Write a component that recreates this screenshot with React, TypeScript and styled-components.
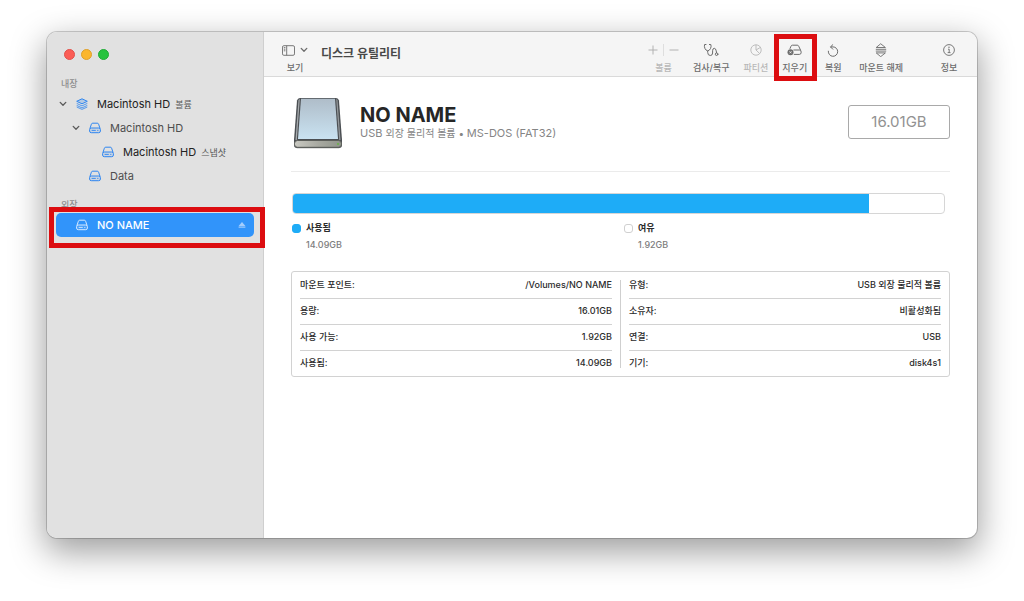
import React from "react";
import styled, { createGlobalStyle, css } from "styled-components";

const GlobalStyle = createGlobalStyle`
  *, *::before, *::after { box-sizing: border-box; }
  body {
    margin: 0;
    background: #fff;
    color: #2b2b2b;
    font-family: Inter, "Noto Sans CJK KR", sans-serif;
    font-size: 11px;
    line-height: 16px;
  }
  button {
    margin: 0;
    padding: 0;
    border: 0;
    background: none;
    color: inherit;
    font: inherit;
  }
  h1, h2, h3, p, ul, dl, dd { margin: 0; padding: 0; }
  ul { list-style: none; }
  svg { display: block; flex: none; }
`;

const Desktop = styled.div`
  display: flex;
  min-height: 100vh;
  padding: 32px 47px 63px;
`;

const Window = styled.div`
  display: flex;
  flex: 1;
  min-width: 0;
  border-radius: 10px;
  background: #fff;
  box-shadow:
    0 0 0 1px rgba(0, 0, 0, 0.18),
    0 12px 34px 2px rgba(0, 0, 0, 0.38);
`;

const Sidebar = styled.nav`
  position: relative;
  z-index: 1;
  flex: none;
  width: 217px;
  padding: 17px 9px;
  border-right: 1px solid #cfcfcf;
  border-radius: 10px 0 0 10px;
  background: #e1e1e1;
`;

const WindowControls = styled.div`
  display: flex;
  gap: 6px;
  padding: 0 8px;
`;

const WindowDot = styled.button<{ $color: string; $edge: string }>`
  width: 11px;
  height: 11px;
  border: 1px solid ${(p) => p.$edge};
  border-radius: 50%;
  background: ${(p) => p.$color};
`;

const SectionTitle = styled.h2<{ $top: number }>`
  margin-top: ${(p) => p.$top}px;
  padding-left: 5px;
  color: #8d8d8d;
  font-size: 9px;
  font-weight: 500;
  line-height: 16px;
`;

const VolumeList = styled.ul`
  position: relative;
`;

const VolumeRow = styled.li<{ $level?: number; $selected?: boolean }>`
  display: flex;
  align-items: center;
  height: 24px;
  padding-right: 8px;
  padding-left: ${(p) => (p.$level ?? 0) * 13}px;
  border-radius: 5px;
  ${(p) =>
    p.$selected &&
    css`
      background: #3194fa;
      color: #fff;
    `}
`;

const Disclosure = styled.button`
  display: grid;
  place-items: center;
  width: 14px;
  height: 16px;
  color: #5a5a5a;
`;

const DisclosureSpace = styled.span`
  width: 14px;
`;

const VolumeButton = styled.button<{ $dim?: boolean; $selected?: boolean }>`
  display: flex;
  flex: 1;
  align-items: center;
  gap: 9px;
  padding-left: 6px;
  color: ${(p) => (p.$selected ? "#fff" : p.$dim ? "#4e4e4e" : "#222")};
  font-weight: ${(p) => (p.$selected ? 500 : 400)};
  text-align: left;
  white-space: nowrap;

  svg { color: ${(p) => (p.$selected ? "#d5e9ff" : "#2f86f0")}; }
`;

const VolumeKind = styled.small`
  margin-left: 5px;
  color: #555;
  font-size: 9px;
`;

const Highlight = styled.span<{ $inset: string }>`
  position: absolute;
  inset: ${(p) => p.$inset};
  border: 5px solid #dc0d10;
  pointer-events: none;
`;

const Main = styled.main`
  flex: 1;
  min-width: 0;
`;

const Toolbar = styled.header`
  display: flex;
  align-items: flex-start;
  height: 45px;
  padding: 9px 16px 0 18px;
  border-bottom: 1px solid #dadada;
  border-radius: 0 10px 0 0;
  background: #f5f5f5;
`;

const ToolbarTitle = styled.h1`
  flex: 1;
  margin: 5px 0 0 13px;
  color: #484848;
  font-size: 12px;
  font-weight: 700;
  line-height: 16px;
  white-space: nowrap;
`;

const Tools = styled.div`
  display: flex;
  gap: 14px;
`;

const Tool = styled.button<{ $apart?: boolean }>`
  position: relative;
  display: flex;
  flex-direction: column;
  align-items: center;
  min-width: 24px;
  margin-left: ${(p) => (p.$apart ? 20 : 0)}px;
  color: #6c6c6c;
  font-size: 9px;
  font-weight: 500;
  line-height: 18px;
  white-space: nowrap;

  &:disabled { color: #b8b8b8; }
`;

const ToolGroup = styled.div`
  display: flex;
  flex-direction: column;
  align-items: center;
  color: #b8b8b8;
  font-size: 9px;
  font-weight: 500;
  line-height: 18px;
`;

const IconSlot = styled.span`
  display: flex;
  align-items: center;
  gap: 5px;
  height: 18px;
`;

const StepButton = styled.button`
  &:disabled { color: #ababab; }
`;

const StepDivider = styled.span`
  width: 1px;
  height: 12px;
  background: #dedede;
`;

const Content = styled.section`
  padding: 17px 27px 28px;
`;

const VolumeHeader = styled.div`
  display: flex;
  align-items: center;
  height: 77px;
  padding-bottom: 21px;
  padding-left: 1px;
`;

const VolumeText = styled.div`
  flex: 1;
  margin-left: 16px;
`;

const VolumeName = styled.h2`
  color: #262626;
  font-size: 20px;
  font-weight: 700;
  line-height: 22px;
`;

const VolumeDescription = styled.p`
  color: #858585;
  font-size: 11px;
  line-height: 14px;
`;

const Korean = styled.span`
  font-size: 10px;
`;

const Capacity = styled.div`
  display: grid;
  place-items: center;
  width: 102px;
  height: 34px;
  border: 1px solid #a9a9a9;
  border-radius: 3px;
  color: #929292;
  font-size: 15px;
`;

const Rule = styled.hr`
  height: 1px;
  margin: 0 0 21px;
  border: 0;
  background: #ebebeb;
`;

const UsageBar = styled.div`
  height: 21px;
  margin: 0 5px 0 1px;
  overflow: hidden;
  border: 1px solid #d6d6d6;
  border-radius: 4px;
`;

const UsageFill = styled.div`
  height: 21px;
  margin: -1px 0 0 -1px;
  background: #1eacf7;
`;

const Legend = styled.dl`
  display: grid;
  grid-template-columns: 1fr 1fr;
  gap: 6px;
  margin: 6px 0 0 1px;
`;

const LegendLabel = styled.dt`
  display: flex;
  align-items: center;
  gap: 5px;
  font-size: 9px;
  font-weight: 700;
  line-height: 16px;
`;

const Swatch = styled.span<{ $filled?: boolean }>`
  width: 9px;
  height: 9px;
  border: 1px solid ${(p) => (p.$filled ? "#1eacf7" : "#d0d0d0")};
  border-radius: 3px;
  background: ${(p) => (p.$filled ? "#1eacf7" : "#fff")};
`;

const LegendValue = styled.dd`
  padding-left: 14px;
  color: #7d7d7d;
  font-size: 9px;
  font-weight: 500;
  line-height: 18px;
`;

const Details = styled.div`
  display: grid;
  grid-template-columns: 1fr 1px 1fr;
  column-gap: 8px;
  margin-top: 17px;
  padding: 0 8px;
  border: 1px solid #d2d2d2;
  border-radius: 3px;
`;

const DetailsDivider = styled.div`
  margin: 8px 0;
  background: #cfcfcf;
`;

const DetailTable = styled.table`
  width: 100%;
  border-collapse: collapse;
  font-size: 9px;
  line-height: 16px;

  tr + tr { border-top: 1px solid #d2d2d2; }
  th, td { height: 26px; padding: 0; font-weight: 500; }
  th { text-align: left; }
  td { text-align: right; }
`;

const DriveIcon = () => (
  <svg width="12" height="12" viewBox="0 0 12 12" fill="none" stroke="currentColor">
    <path d="M.9 6.600 2.400 2.200Q2.700 1.200 3.700 1.200h4.600q1 0 1.300 1l1.500 4.400" />
    <rect x=".6" y="6" width="10.800" height="4.700" rx="1.700" fill="currentColor" fillOpacity=".12" />
    <path d="M2.600 8.400h4.200M8.200 8.400h1.200" strokeWidth=".9" />
  </svg>
);

const LayersIcon = () => (
  <svg width="12" height="12" viewBox="0 0 12 12" fill="none" stroke="currentColor" strokeLinejoin="round">
    <path d="M6 .8 11.3 3.3 6 5.8.7 3.3Z" fill="currentColor" fillOpacity=".25" />
    <path d="M.7 5.4 6 7.9l5.3-2.5M.7 7.4 6 9.9l5.3-2.5M.7 9 6 11.4 11.3 9" strokeWidth=".8" />
  </svg>
);

const ChevronIcon = () => (
  <svg width="8" height="6" viewBox="0 0 8 6" fill="none" stroke="currentColor" strokeWidth="1.3" strokeLinecap="round" strokeLinejoin="round">
    <path d="M1.2 1.4 4 4.3l2.8-2.9" />
  </svg>
);

const EjectIcon = () => (
  <svg width="8" height="8" viewBox="0 0 8 8" fill="#a4cdfc">
    <path d="M4 1 7.4 5H.6Z" />
    <rect x=".6" y="5.5" width="6.8" height="1.200" />
  </svg>
);

const SidebarIcon = () => (
  <svg width="13" height="11" viewBox="0 0 13 11" fill="none" stroke="currentColor" strokeWidth=".9">
    <rect x=".5" y=".7" width="12" height="9.6" rx="1.4" />
    <path d="M4.7.7v9.6M1.8 2.6h1.6M1.8 4.2h1.6M1.8 5.8h1.6" />
  </svg>
);

const PlusIcon = () => (
  <svg width="10" height="10" viewBox="0 0 10 10" stroke="currentColor" strokeWidth=".9">
    <path d="M5 .5v9M.5 5h9" />
  </svg>
);

const MinusIcon = () => (
  <svg width="10" height="10" viewBox="0 0 10 10" stroke="currentColor" strokeWidth=".9">
    <path d="M.5 5h9" />
  </svg>
);

const StethoscopeIcon = () => (
  <svg width="16" height="14" viewBox="0 0 16 14" fill="none" stroke="currentColor" strokeLinecap="round" strokeLinejoin="round">
    <path d="M3 1.500H1.600Q1 3.200 1.900 5.400q.9 1.900 2.800 2.600 2-.7 2.900-2.600.9-2.200.2-3.900H6.400" />
    <path d="M4.700 8v1.400q0 3.100 2.600 3.100 2.300 0 2.300-2.500V7.800q0-2.500 1.700-2.500 1.400 0 1.900 2.500l.4 2" />
    <circle cx="13.600" cy="11.200" r="1.300" />
  </svg>
);

const PieIcon = () => (
  <svg width="12" height="12" viewBox="0 0 12 12" fill="none" stroke="currentColor" strokeWidth=".9">
    <circle cx="6" cy="6" r="5.200" />
    <path d="M6 .8V6l3.700 3.600M6 6l4.400-2.600" />
  </svg>
);

const EraseIcon = () => (
  <svg width="15" height="12" viewBox="0 0 15 12" fill="none" stroke="currentColor">
    <path d="M2.900 4.800 4 2.200q.4-1 1.400-1h4.900q1 0 1.400 1l1.900 4" />
    <path d="M6.400 6h6q1.800 0 1.800 2.200t-1.800 2.200H6.800" />
    <circle cx="3.500" cy="8.300" r="3" fill="currentColor" stroke="none" />
    <path d="m2.500 7.300 2 2M4.500 7.300l-2 2" stroke="#f5f5f5" strokeWidth=".8" />
  </svg>
);

const RestoreIcon = () => (
  <svg width="12" height="13" viewBox="0 0 12 13" fill="none" stroke="currentColor" strokeLinecap="round" strokeLinejoin="round">
    <path d="M1.300 7.200A4.700 4.700 0 1 0 6 2.900H3.800" />
    <path d="M5.800.7 3.500 2.900l2.300 2.300" />
  </svg>
);

const UnmountIcon = () => (
  <svg width="12" height="14" viewBox="0 0 12 14" fill="none" stroke="currentColor" strokeLinecap="round" strokeLinejoin="round">
    <path d="M6 1 10.400 4.500H1.600ZM1.200 6.300h9.600M1.200 8.100h9.600M6 13.400 10.400 9.900H1.600Z" strokeWidth=".9" />
  </svg>
);

const InfoIcon = () => (
  <svg width="12" height="12" viewBox="0 0 12 12" fill="none" stroke="currentColor" strokeWidth=".9">
    <circle cx="6" cy="6" r="5.400" />
    <path d="M5 5.200h1.200v3.300M4.700 8.600h2.800" />
    <circle cx="6" cy="3.300" r=".7" fill="currentColor" stroke="none" />
  </svg>
);

const ExternalDrive = () => (
  <svg width="52" height="54" viewBox="0 -2 52 54">
    <defs>
      <linearGradient id="driveTop" x1="0" y1="0" x2="0" y2="1">
        <stop offset="0" stopColor="#afbdc9" />
        <stop offset="1" stopColor="#c9e2f1" />
      </linearGradient>
      <linearGradient id="driveFront" x1="0" y1="0" x2="1" y2="0">
        <stop offset="0" stopColor="#c9c9c2" />
        <stop offset=".5" stopColor="#a9aaa2" />
        <stop offset="1" stopColor="#8f948a" />
      </linearGradient>
    </defs>
    <path d="M3 49h46l-2 3H5Z" fill="#000" opacity=".12" />
    <path d="M8 1h36q2.500 0 3 2.500L50 43v5q0 3-3 3H5q-3 0-3-3v-5L5 3.500Q5.500 1 8 1Z" fill="#4b4f53" />
    <path d="M6.500 3 3.500 43h1.300L7.800 2Z" fill="#a7abae" />
    <path d="M45.500 3l3 40h-1.300L44.200 2Z" fill="#94989b" />
    <path d="M9 1.800h34L46 42H6Z" fill="url(#driveTop)" />
    <rect x="2.500" y="43.500" width="47" height="6.800" rx="3" fill="url(#driveFront)" stroke="#5c5e5a" />
    <circle cx="46" cy="47" r=".9" fill="#62b83f" />
  </svg>
);

const leftDetails = [
  ["마운트 포인트:", "/Volumes/NO NAME"],
  ["용량:", "16.01GB"],
  ["사용 가능:", "1.92GB"],
  ["사용됨:", "14.09GB"],
];

const rightDetails = [
  ["유형:", "USB 외장 물리적 볼륨"],
  ["소유자:", "비활성화됨"],
  ["연결:", "USB"],
  ["기기:", "disk4s1"],
];

const DetailRows = ({ rows }: { rows: string[][] }) => (
  <DetailTable>
    <tbody>
      {rows.map(([label, value]) => (
        <tr key={label}>
          <th scope="row">{label}</th>
          <td>{value}</td>
        </tr>
      ))}
    </tbody>
  </DetailTable>
);

const usedShare = 88.6;

export default function App() {
  return (
    <>
      <GlobalStyle />
      <Desktop>
        <Window>
          <Sidebar>
            <WindowControls>
              <WindowDot $color="#fb5d55" $edge="#e2504a" aria-label="닫기" />
              <WindowDot $color="#fbb62e" $edge="#dfa02a" aria-label="최소화" />
              <WindowDot $color="#27c33f" $edge="#20ab36" aria-label="확대" />
            </WindowControls>
            <SectionTitle $top={16}>내장</SectionTitle>
            <VolumeList>
              <VolumeRow>
                <Disclosure aria-label="접기"><ChevronIcon /></Disclosure>
                <VolumeButton>
                  <LayersIcon />
                  <span>Macintosh HD<VolumeKind>볼륨</VolumeKind></span>
                </VolumeButton>
              </VolumeRow>
              <VolumeRow $level={1}>
                <Disclosure aria-label="접기"><ChevronIcon /></Disclosure>
                <VolumeButton $dim><DriveIcon />Macintosh HD</VolumeButton>
              </VolumeRow>
              <VolumeRow $level={2}>
                <DisclosureSpace />
                <VolumeButton>
                  <DriveIcon />
                  <span>Macintosh HD<VolumeKind>스냅샷</VolumeKind></span>
                </VolumeButton>
              </VolumeRow>
              <VolumeRow $level={1}>
                <DisclosureSpace />
                <VolumeButton $dim><DriveIcon />Data</VolumeButton>
              </VolumeRow>
            </VolumeList>
            <SectionTitle $top={9}>외장</SectionTitle>
            <VolumeList>
              <VolumeRow $selected>
                <DisclosureSpace />
                <VolumeButton $selected><DriveIcon />NO NAME</VolumeButton>
                <button aria-label="추출"><EjectIcon /></button>
              </VolumeRow>
              <Highlight $inset="-6px -11px -11px -7px" />
            </VolumeList>
          </Sidebar>
          <Main>
            <Toolbar>
              <Tool>
                <IconSlot><SidebarIcon /><ChevronIcon /></IconSlot>
                보기
              </Tool>
              <ToolbarTitle>디스크 유틸리티</ToolbarTitle>
              <Tools>
                <ToolGroup>
                  <IconSlot>
                    <StepButton disabled aria-label="추가"><PlusIcon /></StepButton>
                    <StepDivider />
                    <StepButton disabled aria-label="제거"><MinusIcon /></StepButton>
                  </IconSlot>
                  볼륨
                </ToolGroup>
                <Tool><IconSlot><StethoscopeIcon /></IconSlot>검사/복구</Tool>
                <Tool disabled><IconSlot><PieIcon /></IconSlot>파티션</Tool>
                <Tool>
                  <IconSlot><EraseIcon /></IconSlot>지우기
                  <Highlight $inset="-7px -10px -4px -8px" />
                </Tool>
                <Tool><IconSlot><RestoreIcon /></IconSlot>복원</Tool>
                <Tool><IconSlot><UnmountIcon /></IconSlot>마운트 해제</Tool>
                <Tool $apart><IconSlot><InfoIcon /></IconSlot>정보</Tool>
              </Tools>
            </Toolbar>
            <Content>
              <VolumeHeader>
                <ExternalDrive />
                <VolumeText>
                  <VolumeName>NO NAME</VolumeName>
                  <VolumeDescription>
                    USB <Korean>외장 물리적 볼륨 • </Korean>MS-DOS (FAT32)
                  </VolumeDescription>
                </VolumeText>
                <Capacity>16.01GB</Capacity>
              </VolumeHeader>
              <Rule />
              <UsageBar>
                <UsageFill style={{ width: `${usedShare}%` }} />
              </UsageBar>
              <Legend>
                <div>
                  <LegendLabel><Swatch $filled />사용됨</LegendLabel>
                  <LegendValue>14.09GB</LegendValue>
                </div>
                <div>
                  <LegendLabel><Swatch />여유</LegendLabel>
                  <LegendValue>1.92GB</LegendValue>
                </div>
              </Legend>
              <Details>
                <DetailRows rows={leftDetails} />
                <DetailsDivider />
                <DetailRows rows={rightDetails} />
              </Details>
            </Content>
          </Main>
        </Window>
      </Desktop>
    </>
  );
}
